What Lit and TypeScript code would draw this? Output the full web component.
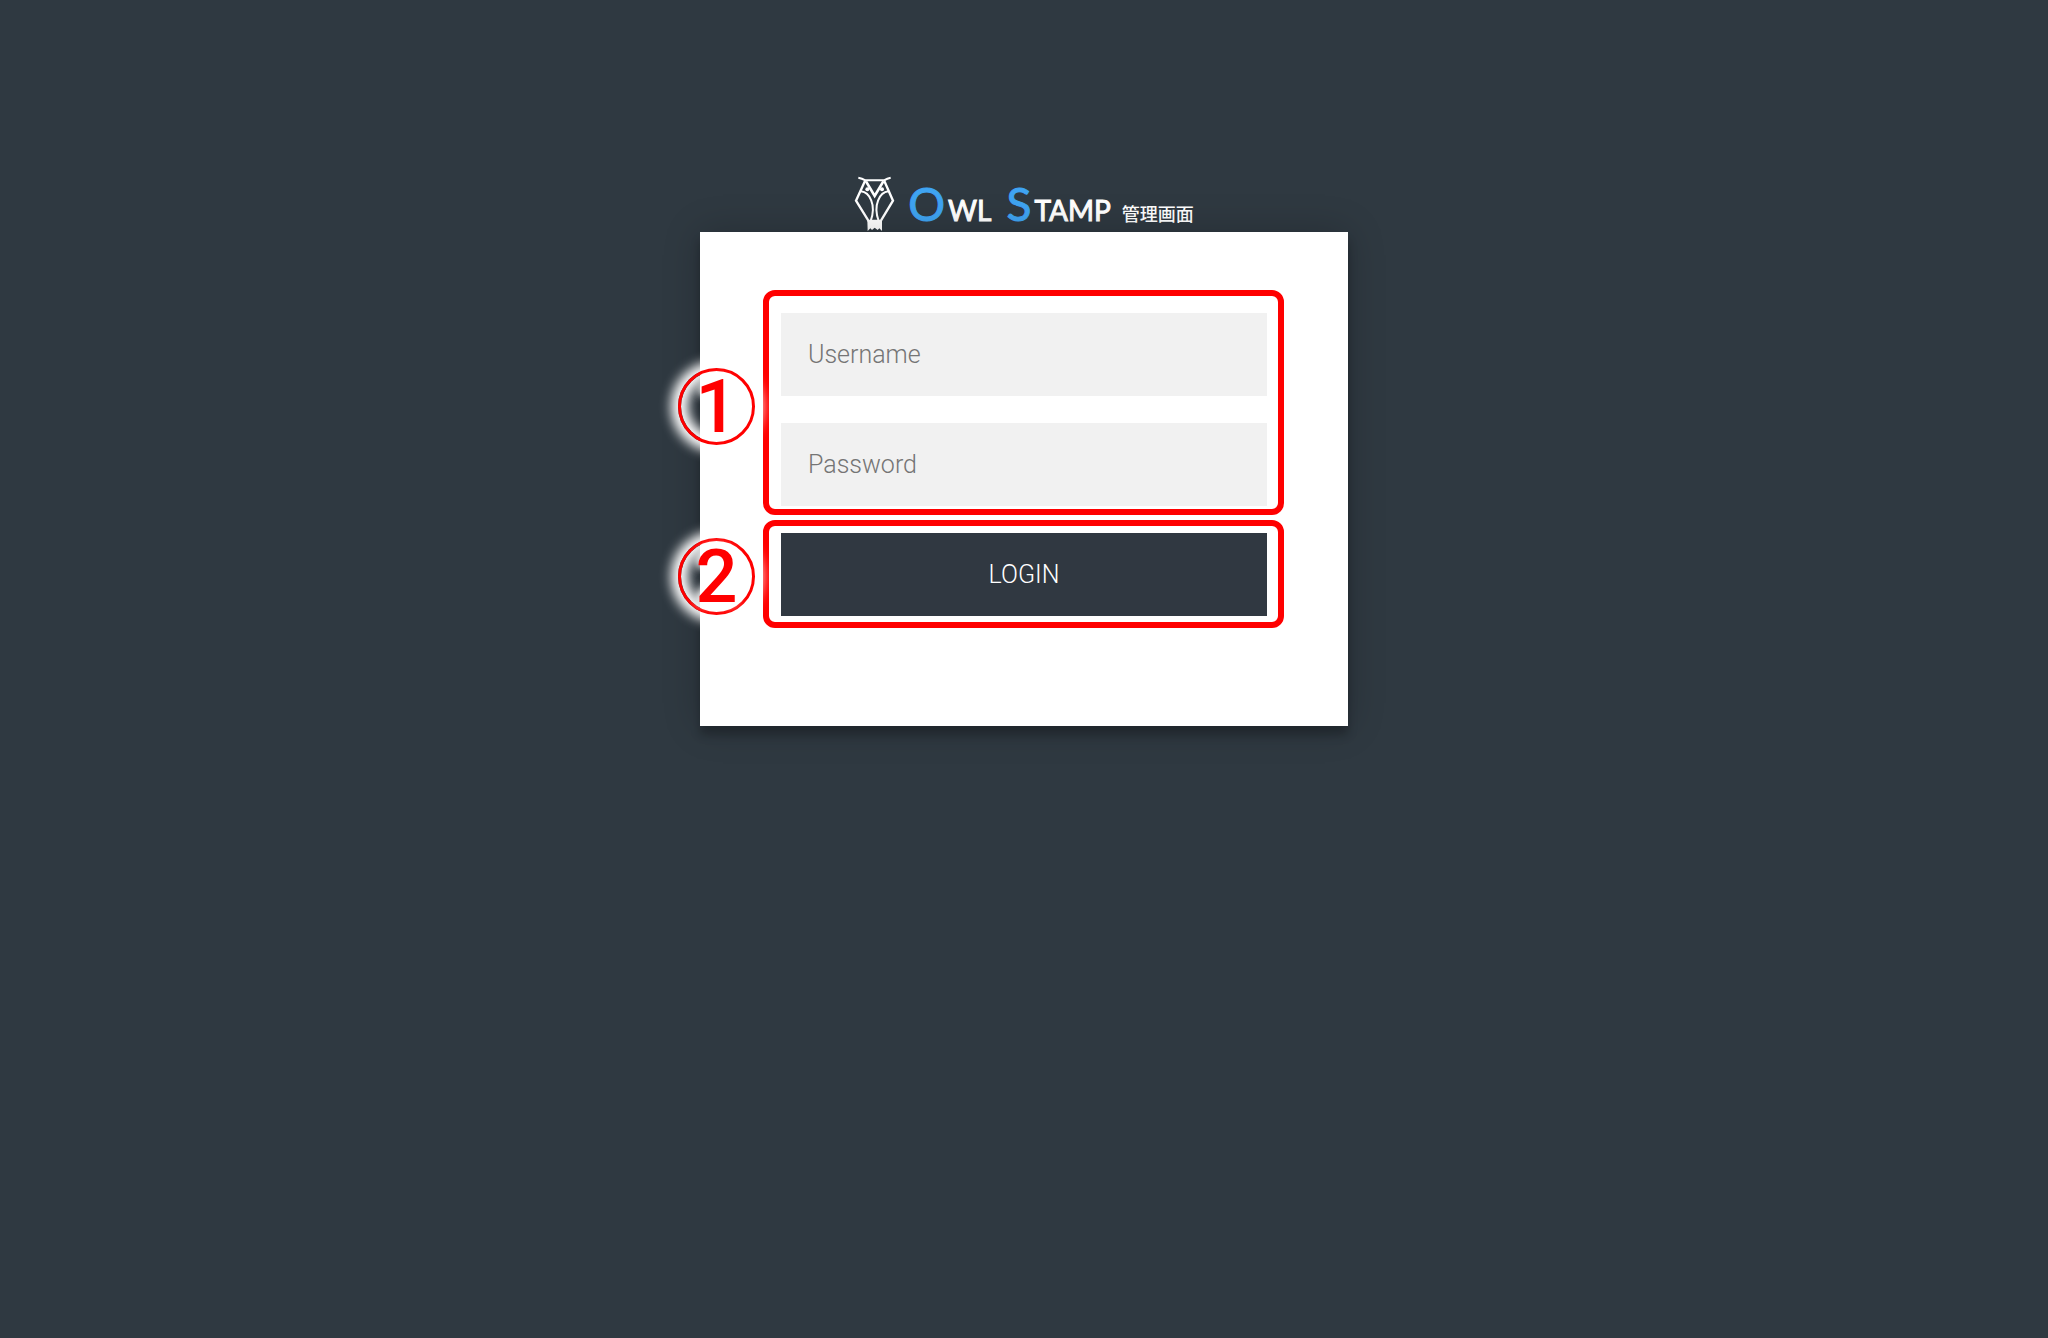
import { LitElement, html, css } from "lit";
import { customElement, property } from "lit/decorators.js";

@customElement("owl-logo")
class OwlLogo extends LitElement {
  static styles = css`
    :host {
      display: flex;
      justify-content: center;
      align-items: flex-end;
      gap: 13px;
      height: 56px;
    }
    .owl {
      width: 41px;
      height: 56px;
    }
    .name {
      display: flex;
      align-items: baseline;
      gap: 3px;
      margin: 0;
      padding-bottom: 1px;
      font: 400 28px/36px Lato, sans-serif;
      color: #fff;
    }
    .initial {
      font-size: 46px;
      color: #3fa4f2;
      -webkit-text-stroke: 1px #3fa4f2;
    }
    .small {
      -webkit-text-stroke: 1px #fff;
    }
    .second {
      margin-left: 12px;
    }
    .suffix {
      margin-left: 8px;
      font: 500 18px/36px "Noto Sans CJK JP", sans-serif;
    }
  `;

  render() {
    return html`
      <svg class="owl" viewBox="42 33 123 168" fill="none" stroke="#fff" stroke-width="8" aria-hidden="true">
        <path d="M55 38Q66 40 76 46H132Q142 40 152 38" stroke-width="6" />
        <path d="M76 46L48 107L86 168H122L159 107L132 46" stroke-width="7" />
        <path d="M78 49L104 93L130 49" />
        <path d="M63 79C88 82 110 118 92 168M145 79C120 82 98 118 116 168" stroke-width="6" />
        <circle cx="82" cy="73" r="6" fill="#fff" stroke="none" />
        <circle cx="126" cy="73" r="6" fill="#fff" stroke="none" />
        <path d="M82 166H126V198L118 190L113 195L104 188L96 195L91 190L83 198Z" fill="#fff" stroke="none" />
      </svg>
      <h1 class="name">
        <span class="initial">O</span><span class="small">WL</span>
        <span class="initial second">S</span><span class="small">TAMP</span>
        <span class="suffix">管理画面</span>
      </h1>
    `;
  }
}

@customElement("step-mark")
class StepMark extends LitElement {
  @property() step = "";

  static styles = css`
    :host {
      display: flex;
      align-items: center;
      justify-content: center;
      box-sizing: border-box;
      width: 77px;
      height: 77px;
      border: 3px solid #f00;
      border-radius: 50%;
      box-shadow: 0 0 12px 7px #fff, inset 0 0 12px 7px #fff;
      font: 500 74px/77px Roboto, sans-serif;
      color: #f00;
      text-shadow: 0 0 12px #fff, 0 0 8px #fff, 0 0 12px #fff;
    }
  `;

  render() {
    return html`${this.step}`;
  }
}

@customElement("app-root")
class AppRoot extends LitElement {
  static styles = css`
    :host {
      display: block;
      box-sizing: border-box;
      min-height: 100vh;
      padding: 176px 24px 80px;
      background: #2f3941;
      font-family: Roboto, sans-serif;
    }
    .page {
      max-width: 648px;
      margin: 0 auto;
    }
    .card {
      position: relative;
      display: flex;
      flex-direction: column;
      gap: 27px;
      padding: 81px 81px 110px;
      background: #fff;
      box-shadow: 0 0 36px rgba(0, 0, 0, 0.2), 0 9px 9px rgba(0, 0, 0, 0.24);
    }
    .group {
      position: relative;
      display: flex;
      flex-direction: column;
      gap: 27px;
    }
    .field,
    .login {
      box-sizing: border-box;
      width: 100%;
      height: 83px;
      margin: 0;
      padding: 27px;
      border: 0;
      border-radius: 0;
      font: 300 25px/29px Roboto, sans-serif;
    }
    .field {
      background: #f1f1f1;
      color: #333;
    }
    .field::placeholder {
      color: #757575;
      opacity: 1;
    }
    .login {
      background: #303841;
      color: #fff;
      text-transform: uppercase;
      cursor: pointer;
    }
    .frame {
      position: absolute;
      inset: -23px -17px -9px -18px;
      border: 6px solid #f00;
      border-radius: 12px;
      pointer-events: none;
    }
    .frame.tight {
      inset: -13px -17px -12px -18px;
    }
    .step {
      position: absolute;
      left: -103px;
      top: calc(50% - 42px);
    }
    .step.low {
      top: calc(50% - 37px);
    }
  `;

  private submit(event: Event) {
    event.preventDefault();
  }

  render() {
    return html`
      <main class="page">
        <owl-logo></owl-logo>
        <form class="card" @submit=${this.submit}>
          <div class="group">
            <input class="field" type="text" name="username" placeholder="Username" aria-label="Username" />
            <input class="field" type="password" name="password" placeholder="Password" aria-label="Password" />
            <div class="frame"></div>
            <step-mark class="step" step="1"></step-mark>
          </div>
          <div class="group">
            <button class="login" type="submit">Login</button>
            <div class="frame tight"></div>
            <step-mark class="step low" step="2"></step-mark>
          </div>
        </form>
      </main>
    `;
  }
}
